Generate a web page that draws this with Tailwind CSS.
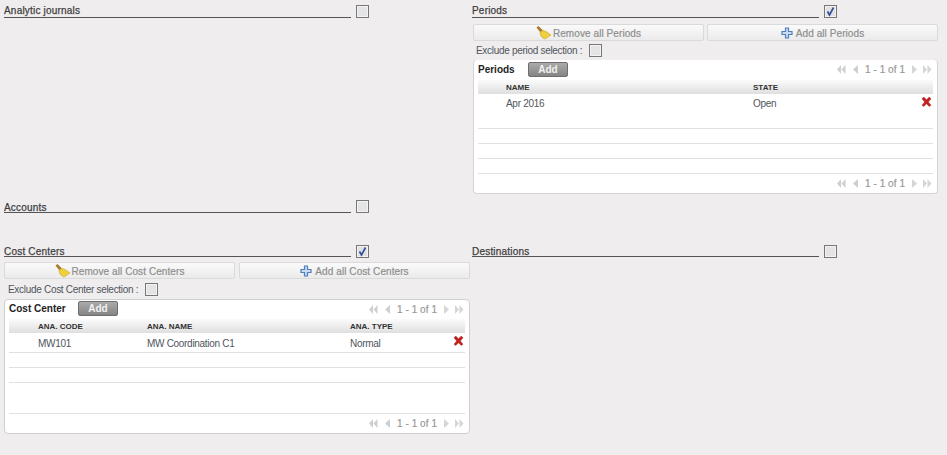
<!DOCTYPE html>
<html><head><meta charset="utf-8"><script src="https://cdn.jsdelivr.net/npm/@tailwindcss/browser@4"></script></head>
<body class="bg-[#efedee] font-['Liberation_Sans',sans-serif] text-[10px] tracking-[-0.3px] text-[#50555c] w-[947px] h-[455px] overflow-hidden">
<svg class="hidden"><defs>
<symbol id="broom" viewBox="0 0 16 14"><path d="M0.500 1.500l2-1.500 4.500 4.500-2.500 2z" fill="#a8792f"/><path d="M4 6l3-1.500 3 1 5 3.500-3 2-3 2-2-1-2-2-1-3z" fill="#f0cf3c" stroke="#c9a52a" stroke-width=".6"/></symbol>
<symbol id="plus" viewBox="0 0 12 12"><path d="M4.500 1h3v3.500H11v3H7.500V11h-3V7.500H1v-3h3.500z" fill="#c9dcf2" stroke="#4f80bd" stroke-width="1.200"/></symbol>
<symbol id="x" viewBox="0 0 12 11"><path d="M1 2l2-2 3 3 3-3 2 2-3 3.500 3 3.500-2 1.500-3-3-3 3-2-1.500 3-3.500z" fill="#c7201c" stroke="#8f1a18" stroke-width=".4"/></symbol>
<symbol id="check" viewBox="0 0 13 13"><rect x=".5" y=".5" width="12" height="12" fill="#f3f3f3" stroke="#777"/><rect x="2" y="2" width="9" height="9" fill="#e1e1e4"/><path d="M3.500 6.500l2 3.500L9.500 2.500" fill="none" stroke="#2f4e94" stroke-width="1.600"/></symbol>
<symbol id="box" viewBox="0 0 13 13"><rect x=".5" y=".5" width="12" height="12" fill="#f3f3f3" stroke="#777"/><rect x="2" y="2" width="9" height="9" fill="#e4e4e6"/></symbol>
<symbol id="first" viewBox="0 0 9 9"><path d="M4 0v9L0 4.500zM8.500 0v9l-4-4.500z" fill="#cfcfcf"/></symbol>
<symbol id="prev" viewBox="0 0 5 9"><path d="M5 0v9L0 4.500z" fill="#cfcfcf"/></symbol>
<symbol id="next" viewBox="0 0 5 9"><path d="M0 0v9l5-4.500z" fill="#d6d6d6"/></symbol>
<symbol id="last" viewBox="0 0 9 9"><path d="M0 0v9l4-4.500zM4.500 0v9l4-4.500z" fill="#d6d6d6"/></symbol>
</defs></svg>
<div class="grid grid-cols-[468px_465px] gap-x-[1px] pl-[4px] items-start">
<!-- Row 1 left -->
<div class="h-[199px] w-[365px]">
  <div class="flex items-end h-[18px]"><div class="w-[347px] h-[18px] border-b border-[#555] text-[#3f3f3f] tracking-[0.2px] [-webkit-text-stroke:0.25px] leading-[22px] overflow-hidden">Analytic journals</div><svg class="w-[13px] h-[13px] ml-[5px]"><use href="#box"/></svg></div>
</div>
<!-- Row 1 right -->
<div class="h-[199px]">
  <div class="flex items-end h-[18px] -ml-[1px]"><div class="w-[347px] h-[18px] border-b border-[#555] text-[#3f3f3f] tracking-[0.2px] [-webkit-text-stroke:0.25px] leading-[22px] overflow-hidden">Periods</div><svg class="w-[13px] h-[13px] ml-[5px]"><use href="#check"/></svg></div>
  <div class="flex gap-[3px] mt-[6px]">
    <div class="w-[231px] h-[17px] rounded-[2px] bg-gradient-to-b from-[#fafafa] to-[#ebebeb] border border-[#dadada] flex items-center justify-center pt-[1px] tracking-[0.08px] [-webkit-text-stroke:0.2px] text-[#8e8e8e]"><svg class="w-[16px] h-[14px] mr-[1px] mb-[1px]"><use href="#broom"/></svg>Remove all Periods</div>
    <div class="w-[231px] h-[17px] rounded-[2px] bg-gradient-to-b from-[#fafafa] to-[#ebebeb] border border-[#dadada] flex items-center justify-center pt-[1px] tracking-[0.08px] [-webkit-text-stroke:0.2px] text-[#8e8e8e]"><svg class="w-[12px] h-[12px] mr-[3px]"><use href="#plus"/></svg>Add all Periods</div>
  </div>
  <div class="flex items-center h-[14px] mt-[2px] pl-[3px]"><span>Exclude period selection :</span><svg class="w-[13px] h-[13px] ml-[7px]"><use href="#box"/></svg></div>
  <div class="mt-[3px] w-[465px] h-[134px] bg-white rounded-[4px] border border-[#d4d4d4] border-t-0 pt-[2px] flex flex-col">
    <div class="flex items-center h-[15px] shrink-0 pl-[4px] pr-[5px]"><b class="text-[10px] tracking-normal text-[#222] w-[50px]">Periods</b><div class="w-[40px] h-[15px] rounded-[2px] bg-gradient-to-b from-[#aaa] to-[#858585] border border-[#6e6e6e] text-[#f2f2f2] font-bold tracking-normal text-center leading-[13px]">Add</div>
      <div class="ml-auto flex items-center text-[#999] tracking-[0.05px] [-webkit-text-stroke:0.2px] mb-[1px]"><svg class="w-[9px] h-[9px]"><use href="#first"/></svg><svg class="w-[5px] h-[9px] ml-[7px]"><use href="#prev"/></svg><span class="mx-[7px]">1 - 1 of 1</span><svg class="w-[5px] h-[9px]"><use href="#next"/></svg><svg class="w-[9px] h-[9px] ml-[6px]"><use href="#last"/></svg></div></div>
    <div class="mx-[4px] mt-[3px] h-[14px] shrink-0 bg-gradient-to-b from-[#fbfbfb] to-[#dfdfdf] flex items-center pt-[1px] font-bold tracking-normal text-[8px] text-[#333] pl-[28px]"><span class="w-[247px]">NAME</span><span>STATE</span></div>
    <div class="mx-[4px] h-[35px] shrink-0 border-b border-[#e0e0e0] flex items-start pt-[2px] pl-[28px] relative"><span class="w-[247px]">Apr 2016</span><span>Open</span><svg class="absolute right-[1px] top-[3px] w-[11px] h-[10px]"><use href="#x"/></svg></div>
    <div class="mx-[4px] h-[15px] shrink-0 border-b border-[#e0e0e0]"></div>
    <div class="mx-[4px] h-[15px] shrink-0 border-b border-[#e0e0e0]"></div>
    <div class="mx-[4px] h-[15px] shrink-0 border-b border-[#e0e0e0]"></div>
    <div class="flex justify-end items-center h-[19px] shrink-0 pl-[5px] pr-[5px] text-[#999] tracking-[0.05px] [-webkit-text-stroke:0.2px]"><svg class="w-[9px] h-[9px]"><use href="#first"/></svg><svg class="w-[5px] h-[9px] ml-[7px]"><use href="#prev"/></svg><span class="mx-[7px]">1 - 1 of 1</span><svg class="w-[5px] h-[9px]"><use href="#next"/></svg><svg class="w-[9px] h-[9px] ml-[6px]"><use href="#last"/></svg></div>
  </div>
</div>
<!-- Row 2 -->
<div class="h-[44px] col-span-2 w-[365px]">
  <div class="flex items-end h-[14px]"><div class="w-[347px] h-[14px] border-b border-[#555] text-[#3f3f3f] tracking-[0.2px] [-webkit-text-stroke:0.25px] leading-[18px] overflow-hidden">Accounts</div><svg class="w-[13px] h-[13px] ml-[5px]"><use href="#box"/></svg></div>
</div>
<!-- Row 3 left -->
<div>
  <div class="flex items-end h-[14px]"><div class="w-[347px] h-[14px] border-b border-[#555] text-[#3f3f3f] tracking-[0.2px] [-webkit-text-stroke:0.25px] leading-[18px] overflow-hidden">Cost Centers</div><svg class="w-[13px] h-[13px] ml-[5px] mb-[-1px]"><use href="#check"/></svg></div>
  <div class="flex gap-[4px] mt-[5px]">
    <div class="w-[231px] h-[17px] rounded-[2px] bg-gradient-to-b from-[#fafafa] to-[#ebebeb] border border-[#dadada] flex items-center justify-center pt-[1px] tracking-[0.08px] [-webkit-text-stroke:0.2px] text-[#8e8e8e]"><svg class="w-[16px] h-[14px] mr-[1px] mb-[1px]"><use href="#broom"/></svg>Remove all Cost Centers</div>
    <div class="w-[231px] h-[17px] rounded-[2px] bg-gradient-to-b from-[#fafafa] to-[#ebebeb] border border-[#dadada] flex items-center justify-center pt-[1px] tracking-[0.08px] [-webkit-text-stroke:0.2px] text-[#8e8e8e]"><svg class="w-[12px] h-[12px] mr-[3px]"><use href="#plus"/></svg>Add all Cost Centers</div>
  </div>
  <div class="flex items-center h-[14px] mt-[3px] pl-[4px]"><span>Exclude Cost Center selection :</span><svg class="w-[13px] h-[13px] ml-[7px]"><use href="#box"/></svg></div>
  <div class="mt-[3px] w-[466px] h-[135px] bg-white rounded-[4px] border border-[#cfcfcf] pt-[1px] flex flex-col">
    <div class="flex items-center h-[15px] shrink-0 pl-[4px] pr-[5px]"><b class="text-[10px] tracking-normal text-[#222] w-[69px]">Cost Center</b><div class="w-[40px] h-[15px] rounded-[2px] bg-gradient-to-b from-[#aaa] to-[#858585] border border-[#6e6e6e] text-[#f2f2f2] font-bold tracking-normal text-center leading-[13px]">Add</div>
      <div class="ml-auto flex items-center pt-[1px] text-[#999] tracking-[0.05px] [-webkit-text-stroke:0.2px]"><svg class="w-[9px] h-[9px]"><use href="#first"/></svg><svg class="w-[5px] h-[9px] ml-[7px]"><use href="#prev"/></svg><span class="mx-[7px]">1 - 1 of 1</span><svg class="w-[5px] h-[9px]"><use href="#next"/></svg><svg class="w-[9px] h-[9px] ml-[6px]"><use href="#last"/></svg></div></div>
    <div class="mx-[4px] mt-[3px] h-[14px] shrink-0 bg-gradient-to-b from-[#fbfbfb] to-[#dfdfdf] flex items-center pt-[2px] font-bold tracking-normal text-[8px] text-[#333] pl-[29px]"><span class="w-[109px]">ANA. CODE</span><span class="w-[203px]">ANA. NAME</span><span>ANA. TYPE</span></div>
    <div class="mx-[4px] h-[20px] shrink-0 border-b border-[#e0e0e0] flex items-start pt-[3px] pl-[29px] relative"><span class="w-[109px]">MW101</span><span class="w-[203px]">MW Coordination C1</span><span>Normal</span><svg class="absolute right-[1px] top-[3px] w-[11px] h-[10px]"><use href="#x"/></svg></div>
    <div class="mx-[4px] h-[15px] shrink-0 border-b border-[#e0e0e0]"></div>
    <div class="mx-[4px] h-[15px] shrink-0 border-b border-[#e0e0e0]"></div>
    <div class="mx-[4px] h-[31px] shrink-0 border-b border-[#e0e0e0]"></div>
    <div class="flex justify-end items-center h-[19px] shrink-0 pl-[5px] pr-[5px] text-[#999] tracking-[0.05px] [-webkit-text-stroke:0.2px]"><svg class="w-[9px] h-[9px]"><use href="#first"/></svg><svg class="w-[5px] h-[9px] ml-[7px]"><use href="#prev"/></svg><span class="mx-[7px]">1 - 1 of 1</span><svg class="w-[5px] h-[9px]"><use href="#next"/></svg><svg class="w-[9px] h-[9px] ml-[6px]"><use href="#last"/></svg></div>
  </div>
</div>
<!-- Row 3 right -->
<div>
  <div class="flex items-end h-[14px] -ml-[1px]"><div class="w-[347px] h-[14px] border-b border-[#555] text-[#3f3f3f] tracking-[0.2px] [-webkit-text-stroke:0.25px] leading-[18px] overflow-hidden">Destinations</div><svg class="w-[13px] h-[13px] ml-[5px] mb-[-1px]"><use href="#box"/></svg></div>
</div>
</div>
</body></html>
